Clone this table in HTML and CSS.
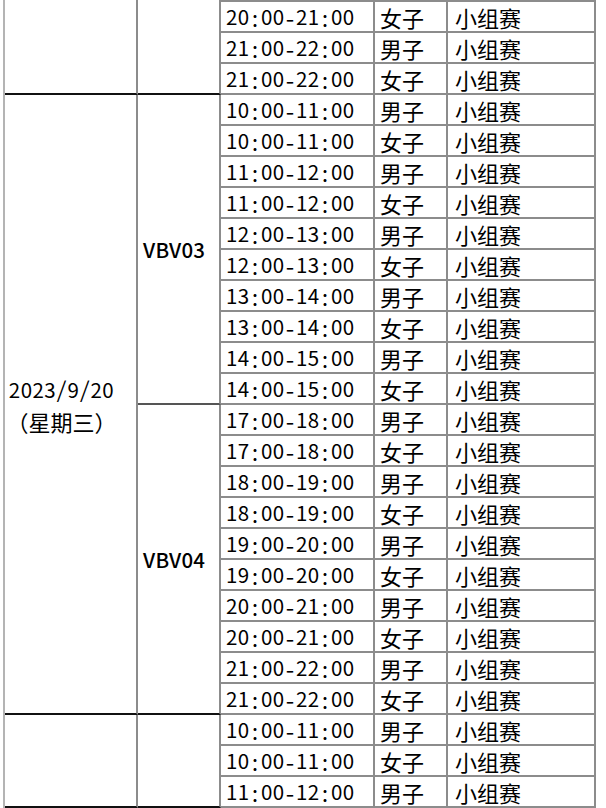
FILE: index.html
```html
<!DOCTYPE html>
<html lang="zh-CN">
<head>
<meta charset="utf-8">
<title>赛程</title>
<link rel="stylesheet" href="styles.css">
</head>
<body>
<div class="sheet">
  <div class="day span3"></div>
  <div class="court span3"></div>
  <div class="time top">20<i>:</i>00<i>-</i>21<i>:</i>00</div><div class="sex top">女子</div><div class="stage top">小组赛</div>
  <div class="time">21<i>:</i>00<i>-</i>22<i>:</i>00</div><div class="sex">男子</div><div class="stage">小组赛</div>
  <div class="time">21<i>:</i>00<i>-</i>22<i>:</i>00</div><div class="sex">女子</div><div class="stage">小组赛</div>

  <div class="day span20"><span class="date">2023<i>/</i>9<i>/</i>20</span><span>（星期三）</span></div>
  <div class="court court-mid span10">VBV03</div>
  <div class="time">10<i>:</i>00<i>-</i>11<i>:</i>00</div><div class="sex">男子</div><div class="stage">小组赛</div>
  <div class="time">10<i>:</i>00<i>-</i>11<i>:</i>00</div><div class="sex">女子</div><div class="stage">小组赛</div>
  <div class="time">11<i>:</i>00<i>-</i>12<i>:</i>00</div><div class="sex">男子</div><div class="stage">小组赛</div>
  <div class="time">11<i>:</i>00<i>-</i>12<i>:</i>00</div><div class="sex">女子</div><div class="stage">小组赛</div>
  <div class="time">12<i>:</i>00<i>-</i>13<i>:</i>00</div><div class="sex">男子</div><div class="stage">小组赛</div>
  <div class="time">12<i>:</i>00<i>-</i>13<i>:</i>00</div><div class="sex">女子</div><div class="stage">小组赛</div>
  <div class="time">13<i>:</i>00<i>-</i>14<i>:</i>00</div><div class="sex">男子</div><div class="stage">小组赛</div>
  <div class="time">13<i>:</i>00<i>-</i>14<i>:</i>00</div><div class="sex">女子</div><div class="stage">小组赛</div>
  <div class="time">14<i>:</i>00<i>-</i>15<i>:</i>00</div><div class="sex">男子</div><div class="stage">小组赛</div>
  <div class="time">14<i>:</i>00<i>-</i>15<i>:</i>00</div><div class="sex">女子</div><div class="stage">小组赛</div>
  <div class="court span10">VBV04</div>
  <div class="time">17<i>:</i>00<i>-</i>18<i>:</i>00</div><div class="sex">男子</div><div class="stage">小组赛</div>
  <div class="time">17<i>:</i>00<i>-</i>18<i>:</i>00</div><div class="sex">女子</div><div class="stage">小组赛</div>
  <div class="time">18<i>:</i>00<i>-</i>19<i>:</i>00</div><div class="sex">男子</div><div class="stage">小组赛</div>
  <div class="time">18<i>:</i>00<i>-</i>19<i>:</i>00</div><div class="sex">女子</div><div class="stage">小组赛</div>
  <div class="time">19<i>:</i>00<i>-</i>20<i>:</i>00</div><div class="sex">男子</div><div class="stage">小组赛</div>
  <div class="time">19<i>:</i>00<i>-</i>20<i>:</i>00</div><div class="sex">女子</div><div class="stage">小组赛</div>
  <div class="time">20<i>:</i>00<i>-</i>21<i>:</i>00</div><div class="sex">男子</div><div class="stage">小组赛</div>
  <div class="time">20<i>:</i>00<i>-</i>21<i>:</i>00</div><div class="sex">女子</div><div class="stage">小组赛</div>
  <div class="time">21<i>:</i>00<i>-</i>22<i>:</i>00</div><div class="sex">男子</div><div class="stage">小组赛</div>
  <div class="time">21<i>:</i>00<i>-</i>22<i>:</i>00</div><div class="sex">女子</div><div class="stage">小组赛</div>

  <div class="day span3"></div>
  <div class="court span3"></div>
  <div class="time">10<i>:</i>00<i>-</i>11<i>:</i>00</div><div class="sex">男子</div><div class="stage">小组赛</div>
  <div class="time">10<i>:</i>00<i>-</i>11<i>:</i>00</div><div class="sex">女子</div><div class="stage">小组赛</div>
  <div class="time">11<i>:</i>00<i>-</i>12<i>:</i>00</div><div class="sex">男子</div><div class="stage">小组赛</div>
</div>
</body>
</html>
```
FILE: styles.css
```css
html, body {
  margin: 0;
  padding: 0;
  background: #ffffff;
}

body {
  overflow: hidden;
  font-family: "Noto Sans CJK SC", "Noto Sans", sans-serif;
  color: #000000;
}

.sheet {
  margin-left: 3px;
  display: grid;
  grid-template-columns: 133px 83px 154px 73px 148px;
  grid-template-rows: 33px;
  grid-auto-rows: 31px;
  border-left: 2px solid #b4b4b4;
  width: max-content;
}

.sheet > div {
  box-sizing: border-box;
  border-right: 2px solid #8c8c8c;
  border-bottom: 2px solid #8c8c8c;
  background: #ffffff;
}

.sheet > .top {
  border-top: 2px solid #8c8c8c;
}

.span3 { grid-row: span 3; }
.span10 { grid-row: span 10; }
.span20 { grid-row: span 20; }

.sheet > .day,
.sheet > .court {
  border-bottom-color: #111111;
}

.day { grid-column: 1; }
.court { grid-column: 2; }

.sheet > .court-mid {
  border-bottom-color: #555555;
}

/* separators (colon, hyphen, slash) use half-width forms like the sheet font */
i {
  font-style: normal;
  font-feature-settings: "hwid" 1;
  font-size: 22px;
}

.day {
  display: flex;
  flex-direction: column;
  align-items: center;
  justify-content: center;
  padding-right: 18px;
  font-size: 22px;
  line-height: 32px;
}

.date {
  font-size: 20.5px;
  letter-spacing: 0.4px;
}

.court {
  display: flex;
  align-items: center;
  padding-left: 5px;
  font-size: 20.5px;
  font-weight: 500;
  letter-spacing: 0.2px;
}

.time, .sex, .stage {
  display: flex;
  align-items: center;
  font-size: 22px;
  line-height: 1;
}

.time {
  padding-left: 5px;
  font-size: 20.5px;
  letter-spacing: 0.4px;
  white-space: pre;
}

.sex {
  padding-left: 5px;
}

.stage {
  padding-left: 7px;
}
```
